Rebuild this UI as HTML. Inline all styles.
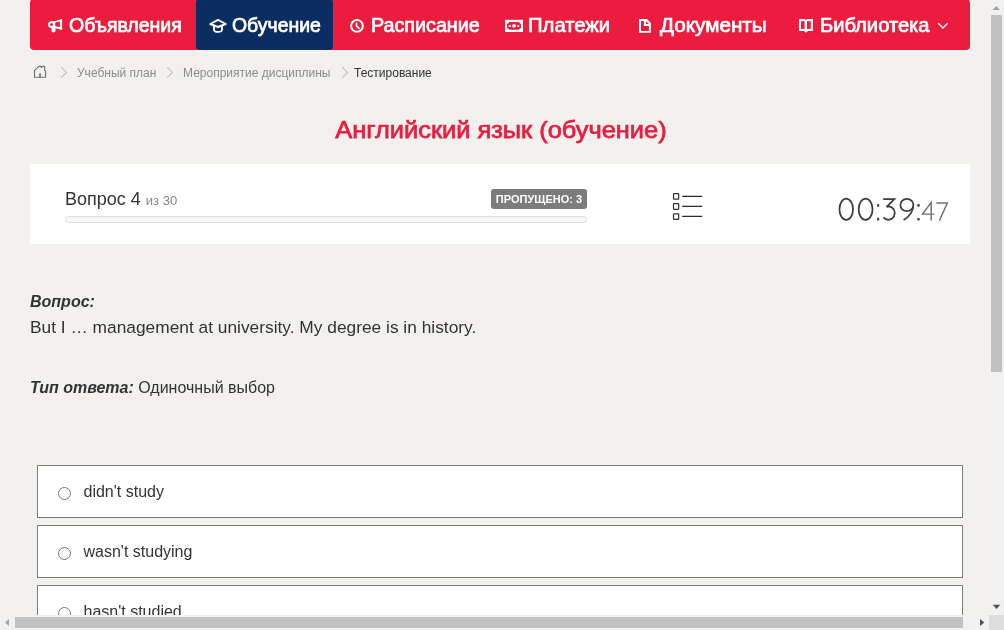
<!DOCTYPE html>
<html><head><meta charset="utf-8">
<style>
*{box-sizing:border-box;margin:0;padding:0}
html,body{width:1004px;height:630px;overflow:hidden;background:#f2f1ee;font-family:"Liberation Sans",sans-serif;color:#333}
.abs{position:absolute}
svg{position:absolute;overflow:visible}
#nav{position:absolute;left:30px;top:-1px;width:940px;height:51px;background:#ec1c3e;border-radius:4px}
#act{position:absolute;left:196px;top:-1px;width:137px;height:51px;background:#0b2d62;border-radius:4px}
.ni{position:absolute;top:14px;color:#fff;font-weight:normal;-webkit-text-stroke:0.7px #fff;font-size:20px;line-height:22px;white-space:nowrap;transform-origin:0 0}
.bc{position:absolute;top:65px;font-size:12px;line-height:16px;color:#8c8c8c;white-space:nowrap}
#title{position:absolute;left:1px;width:1000px;top:116px;transform:scaleX(1.058);text-align:center;color:#e81d40;font-weight:normal;-webkit-text-stroke:0.75px #e81d40;font-size:24px;line-height:28px;white-space:nowrap}
#card{position:absolute;left:30px;top:164px;width:940px;height:80px;background:#fff}
.opt{position:absolute;left:37px;width:926px;height:53px;background:#fff;border:1px solid #7a7a7a}
.opt .rd{position:absolute;left:20px;top:21px;width:13px;height:13px;border:1px solid #767676;border-radius:50%;background:#fff}
.opt .tx{position:absolute;left:45.5px;top:17px;font-size:16px;line-height:18px;color:#333;white-space:nowrap}
</style></head><body><div id="root" style="position:absolute;left:0;top:0;width:1004px;height:630px;will-change:transform">
<div id="nav"></div>
<div id="act"></div>
<div class="ni" style="left:69px;transform:scaleX(0.975)">Объявления</div>
<div class="ni" style="left:232px;transform:scaleX(0.972)">Обучение</div>
<div class="ni" style="left:371px;transform:scaleX(0.986)">Расписание</div>
<div class="ni" style="left:528px;transform:scaleX(1.013)">Платежи</div>
<div class="ni" style="left:660px;transform:scaleX(1.035)">Документы</div>
<div class="ni" style="left:820px;transform:scaleX(1.0075)">Библиотека</div>

<!-- megaphone -->
<svg style="left:45px;top:15px" width="20" height="20" viewBox="0 0 20 20">
 <path d="M10 6.2 H6.4 A3.4 3.4 0 0 0 6.4 13 H10 Z" fill="#fff"/>
 <path d="M9.6 6.2 L17.1 4.1 V14.9 L9.6 13 Z" fill="#fff"/>
 <path d="M6.5 12 H10.5 V15.6 A2 2 0 0 1 6.5 15.6 Z" fill="#fff"/>
 <ellipse cx="6.5" cy="9.45" rx="1.4" ry="1.55" fill="#ec1c3e"/>
 <path d="M10.2 7.6 L14.9 6.5 V12.2 L10.2 11.1 Z" fill="#ec1c3e"/>
</svg>
<!-- grad cap -->
<svg style="left:207px;top:15px" width="22" height="20" viewBox="0 0 22 20">
 <path d="M3.3 9 L11 4.9 L18.8 9 L11 12 Z" fill="none" stroke="#fff" stroke-width="1.9" stroke-linejoin="round"/>
 <path d="M7 10.2 V14.4 Q7 16.9 11 16.9 Q15 16.9 15 14.4 V10.2" fill="none" stroke="#fff" stroke-width="1.9"/>
</svg>
<!-- clock -->
<svg style="left:346px;top:15px" width="20" height="20" viewBox="0 0 20 20">
 <circle cx="10.95" cy="10.95" r="5.85" fill="none" stroke="#fff" stroke-width="2"/>
 <path d="M10.5 8.4 V11 L13 13.3" fill="none" stroke="#fff" stroke-width="1.7" stroke-linecap="round" stroke-linejoin="round"/>
</svg>
<!-- money -->
<svg style="left:502px;top:15px" width="24" height="20" viewBox="0 0 24 20">
 <rect x="3" y="4.8" width="18" height="12.2" fill="#fff"/>
 <path d="M7.2 7 H16.8 L19 9.2 V12.6 L16.8 14.8 H7.2 L5 12.6 V9.2 Z" fill="#ec1c3e"/>
 <circle cx="12" cy="10.9" r="1.8" fill="#fff"/>
 <rect x="6.8" y="10.2" width="2.1" height="1.8" fill="#fff"/>
 <rect x="15.1" y="10.2" width="2.1" height="1.8" fill="#fff"/>
</svg>
<!-- doc -->
<svg style="left:635px;top:15px" width="20" height="20" viewBox="0 0 20 20">
 <path d="M4 4.1 H11.9 L15.9 7.9 V17.8 H4 Z" fill="#fff"/>
 <path d="M6 6.1 H8.9 V11.1 H13.9 V15.9 H6 Z" fill="#ec1c3e"/>
 <path d="M11 6.4 L13.9 9.1 H11 Z" fill="#ec1c3e"/>
</svg>
<!-- book -->
<svg style="left:795px;top:15px" width="20" height="20" viewBox="0 0 20 20">
 <path d="M4 4 H9.5 L11 5 L12.5 4 H17.9 V15.9 H13 L11 17.8 L9 15.9 H4 Z" fill="#fff"/>
 <rect x="6" y="6.2" width="3.6" height="7.7" fill="#ec1c3e"/>
 <rect x="12" y="6.2" width="3.8" height="7.7" fill="#ec1c3e"/>
</svg>
<!-- chevron -->
<svg style="left:932px;top:17px" width="20" height="18" viewBox="0 0 20 18">
 <path d="M6.2 6.3 L10.9 11 L15.7 6.3" fill="none" stroke="#fff" stroke-width="1.3"/>
</svg>

<!-- breadcrumbs -->
<svg style="left:30px;top:62px" width="20" height="20" viewBox="0 0 20 20">
 <path d="M4.5 15.2 V8.7 L8.8 4.4 H10.6 L11.4 5.6 L12.2 4.4 H14.6 V8.4 L15.6 9.1 V15.2 Z" fill="none" stroke="#6e6e6e" stroke-width="1.1" stroke-linejoin="round"/>
 <path d="M10 11.2 V15.2" stroke="#6e6e6e" stroke-width="1.6"/>
</svg>
<svg style="left:58px;top:62px" width="12" height="20" viewBox="0 0 12 20"><path d="M3.2 5.2 L8.5 10.5 L3.2 15.6" fill="none" stroke="#bcbcbc" stroke-width="1.05"/></svg>
<svg style="left:164px;top:62px" width="12" height="20" viewBox="0 0 12 20"><path d="M3.2 5.2 L8.5 10.5 L3.2 15.6" fill="none" stroke="#bcbcbc" stroke-width="1.05"/></svg>
<svg style="left:339px;top:62px" width="12" height="20" viewBox="0 0 12 20"><path d="M3.2 5.2 L8.5 10.5 L3.2 15.6" fill="none" stroke="#bcbcbc" stroke-width="1.05"/></svg>
<div class="bc" style="left:77px">Учебный план</div>
<div class="bc" style="left:183px">Мероприятие дисциплины</div>
<div class="bc" style="left:354px;color:#333">Тестирование</div>

<div id="title">Английский язык (обучение)</div>

<div id="card"></div>
<div class="abs" style="left:65px;top:189px;font-size:18px;line-height:20px;color:#333;white-space:nowrap">Вопрос 4 <span style="font-size:13px;color:#888">из 30</span></div>
<div class="abs" style="left:65px;top:216px;width:522px;height:7px;border:1px solid #ddd;border-radius:4px;background:#f7f7f7"></div>
<div class="abs" style="left:491px;top:189px;width:96px;height:20px;background:#7c7c7c;border-radius:3px;color:#fff;font-size:11px;font-weight:bold;line-height:20px;text-align:center;white-space:nowrap">ПРОПУЩЕНО: 3</div>

<!-- list icon -->
<svg style="left:666px;top:186px" width="44" height="40" viewBox="0 0 44 40">
 <g fill="none" stroke="#333" stroke-width="1.2">
  <rect x="7.5" y="7.6" width="5.2" height="5.6" rx=".5"/>
  <rect x="7.5" y="17.7" width="5.2" height="5.6" rx=".5"/>
  <rect x="7.5" y="27.8" width="5.2" height="5.6" rx=".5"/>
 </g>
 <g stroke="#2b2b2b" stroke-width="1.15">
  <path d="M16.2 10.3 H36.2 M16.2 20.3 H36.2 M16.2 30.3 H36.2"/>
 </g>
</svg>

<!-- timer -->
<svg style="left:830px;top:190px" width="130" height="40" viewBox="830 190 130 40">
 <g fill="none" stroke="#3d3d3d" stroke-width="1.75" stroke-linecap="butt">
  <ellipse cx="846.25" cy="209.25" rx="6.8" ry="10.6"/>
  <ellipse cx="865.6" cy="209.25" rx="6.95" ry="10.6"/>
  <path d="M883.2 199 H894.4 L886.6 206.9" stroke-linejoin="miter"/><path d="M886.6 206.9 Q887.8 206.3 889 206.3 A6.4 6.75 0 1 1 883.5 217.4"/>
  <ellipse cx="906.9" cy="205" rx="6.5" ry="6.1"/>
  <path d="M913.3 206.2 Q912.6 214.5 903.6 220.1"/>
 </g>
 <g fill="#444">
  <rect x="877" y="204.1" width="2.2" height="2.6"/>
  <rect x="877" y="217.9" width="2.2" height="2.6"/>
  <rect x="917.2" y="204.1" width="2.6" height="2.7" rx="1"/>
  <rect x="917.2" y="217.9" width="2.6" height="2.7" rx="1"/>
 </g>
 <g fill="none" stroke="#707070" stroke-width="1.45">
  <path d="M931.2 220.6 V202.4 L922.6 214.1 H934.4"/>
  <path d="M936.4 203 H947.3 L939.4 220.6"/>
 </g>
</svg>

<div class="abs" style="left:30px;top:293px;font-size:16px;line-height:18px;font-weight:bold;font-style:italic;color:#333;white-space:nowrap">Вопрос:</div>
<div class="abs" style="left:30px;top:317px;font-size:17.33px;line-height:20px;color:#333;white-space:nowrap">But I … management at university. My degree is in history.</div>
<div class="abs" style="left:30px;top:378px;font-size:16px;line-height:20px;color:#333;white-space:nowrap"><b><i>Тип ответа:</i></b> Одиночный выбор</div>

<div class="opt" style="top:465px"><div class="rd"></div><div class="tx">didn't study</div></div>
<div class="opt" style="top:525px"><div class="rd"></div><div class="tx">wasn't studying</div></div>
<div class="opt" style="top:585px"><div class="rd"></div><div class="tx">hasn't studied</div></div>

<!-- scrollbars -->
<div class="abs" style="left:0;top:615px;width:989px;height:15px;background:#f1f1f1"></div>
<div class="abs" style="left:15px;top:617px;width:948px;height:11px;background:#c1c1c1"></div>
<svg style="left:0;top:615px" width="15" height="15"><path d="M9 4 V11 L5 7.5 Z" fill="#a3a3a3"/></svg>
<svg style="left:974px;top:615px" width="15" height="15"><path d="M6 4 V11 L10.3 7.5 Z" fill="#505050"/></svg>
<div class="abs" style="left:989px;top:0;width:15px;height:615px;background:#f1f1f1"></div>
<div class="abs" style="left:991px;top:15px;width:11px;height:357px;background:#c1c1c1"></div>
<svg style="left:989px;top:0" width="15" height="15"><path d="M3.5 10 H11 L7.25 6 Z" fill="#a3a3a3"/></svg>
<svg style="left:989px;top:600px" width="15" height="15"><path d="M3.9 4.7 H11.2 L7.5 9 Z" fill="#505050"/></svg>
<div class="abs" style="left:989px;top:615px;width:15px;height:15px;background:#dcdcdc"></div>
</div></body></html>
